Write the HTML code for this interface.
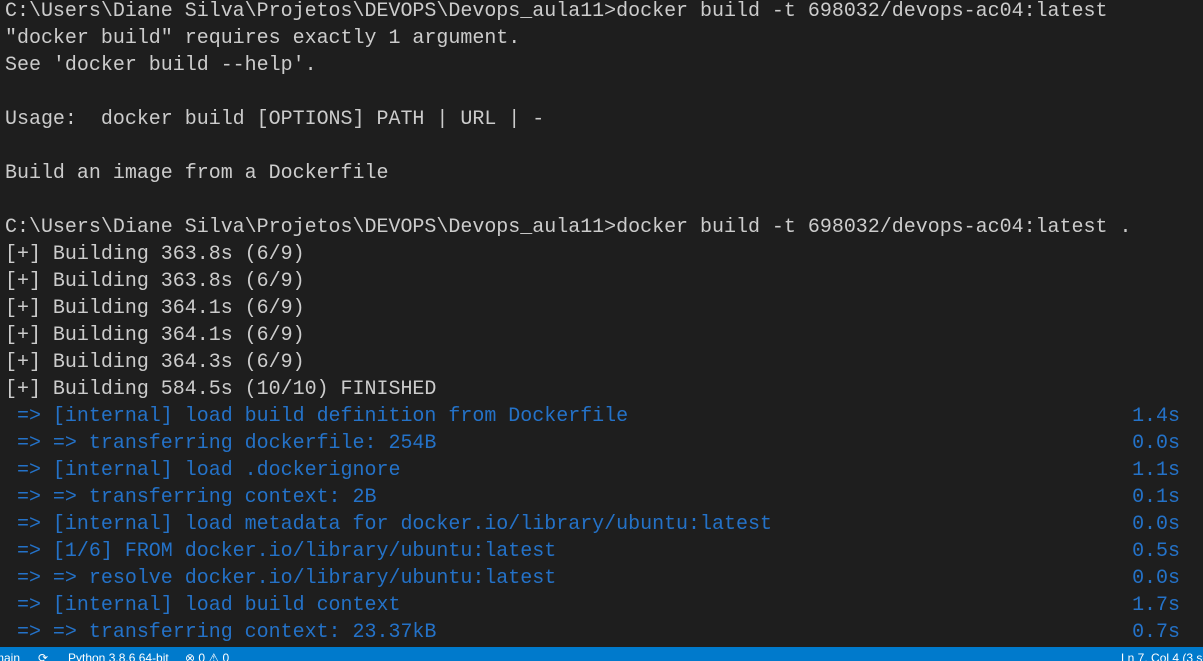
<!DOCTYPE html>
<html><head><meta charset="utf-8"><style>
html,body{margin:0;padding:0;width:1203px;height:661px;overflow:hidden;background:#1e1e1e;}
#t{position:absolute;left:5px;top:-3px;font-family:"Liberation Mono",monospace;font-size:19.98px;line-height:27px;color:#cccccc;white-space:pre;}
.b{color:#2472c8;position:relative;width:1175px;}
.b span{position:absolute;right:0;top:0;}
#sb{position:absolute;left:0;top:647px;width:1203px;height:14px;background:#007acc;color:#fff;font-family:"Liberation Sans",sans-serif;font-size:12px;white-space:pre;overflow:hidden;}
#sb div{position:absolute;top:4px;}
</style></head><body>
<div id="t"><div>C:\Users\Diane Silva\Projetos\DEVOPS\Devops_aula11&gt;docker build -t 698032/devops-ac04:latest</div><div>"docker build" requires exactly 1 argument.</div><div>See 'docker build --help'.</div><div> </div><div>Usage:  docker build [OPTIONS] PATH | URL | -</div><div> </div><div>Build an image from a Dockerfile</div><div> </div><div>C:\Users\Diane Silva\Projetos\DEVOPS\Devops_aula11&gt;docker build -t 698032/devops-ac04:latest .</div><div>[+] Building 363.8s (6/9)</div><div>[+] Building 363.8s (6/9)</div><div>[+] Building 364.1s (6/9)</div><div>[+] Building 364.1s (6/9)</div><div>[+] Building 364.3s (6/9)</div><div>[+] Building 584.5s (10/10) FINISHED</div><div class="b"> =&gt; [internal] load build definition from Dockerfile<span>1.4s</span></div><div class="b"> =&gt; =&gt; transferring dockerfile: 254B<span>0.0s</span></div><div class="b"> =&gt; [internal] load .dockerignore<span>1.1s</span></div><div class="b"> =&gt; =&gt; transferring context: 2B<span>0.1s</span></div><div class="b"> =&gt; [internal] load metadata for docker.io/library/ubuntu:latest<span>0.0s</span></div><div class="b"> =&gt; [1/6] FROM docker.io/library/ubuntu:latest<span>0.5s</span></div><div class="b"> =&gt; =&gt; resolve docker.io/library/ubuntu:latest<span>0.0s</span></div><div class="b"> =&gt; [internal] load build context<span>1.7s</span></div><div class="b"> =&gt; =&gt; transferring context: 23.37kB<span>0.7s</span></div></div>
<div id="sb"><div style="left:-6px">main</div><div style="left:38px">⟳</div><div style="left:68px">Python 3.8.6 64-bit</div><div style="left:185px">⊗ 0 ⚠ 0</div><div style="left:1121px">Ln 7, Col 4 (3 se</div></div>
</body></html>
